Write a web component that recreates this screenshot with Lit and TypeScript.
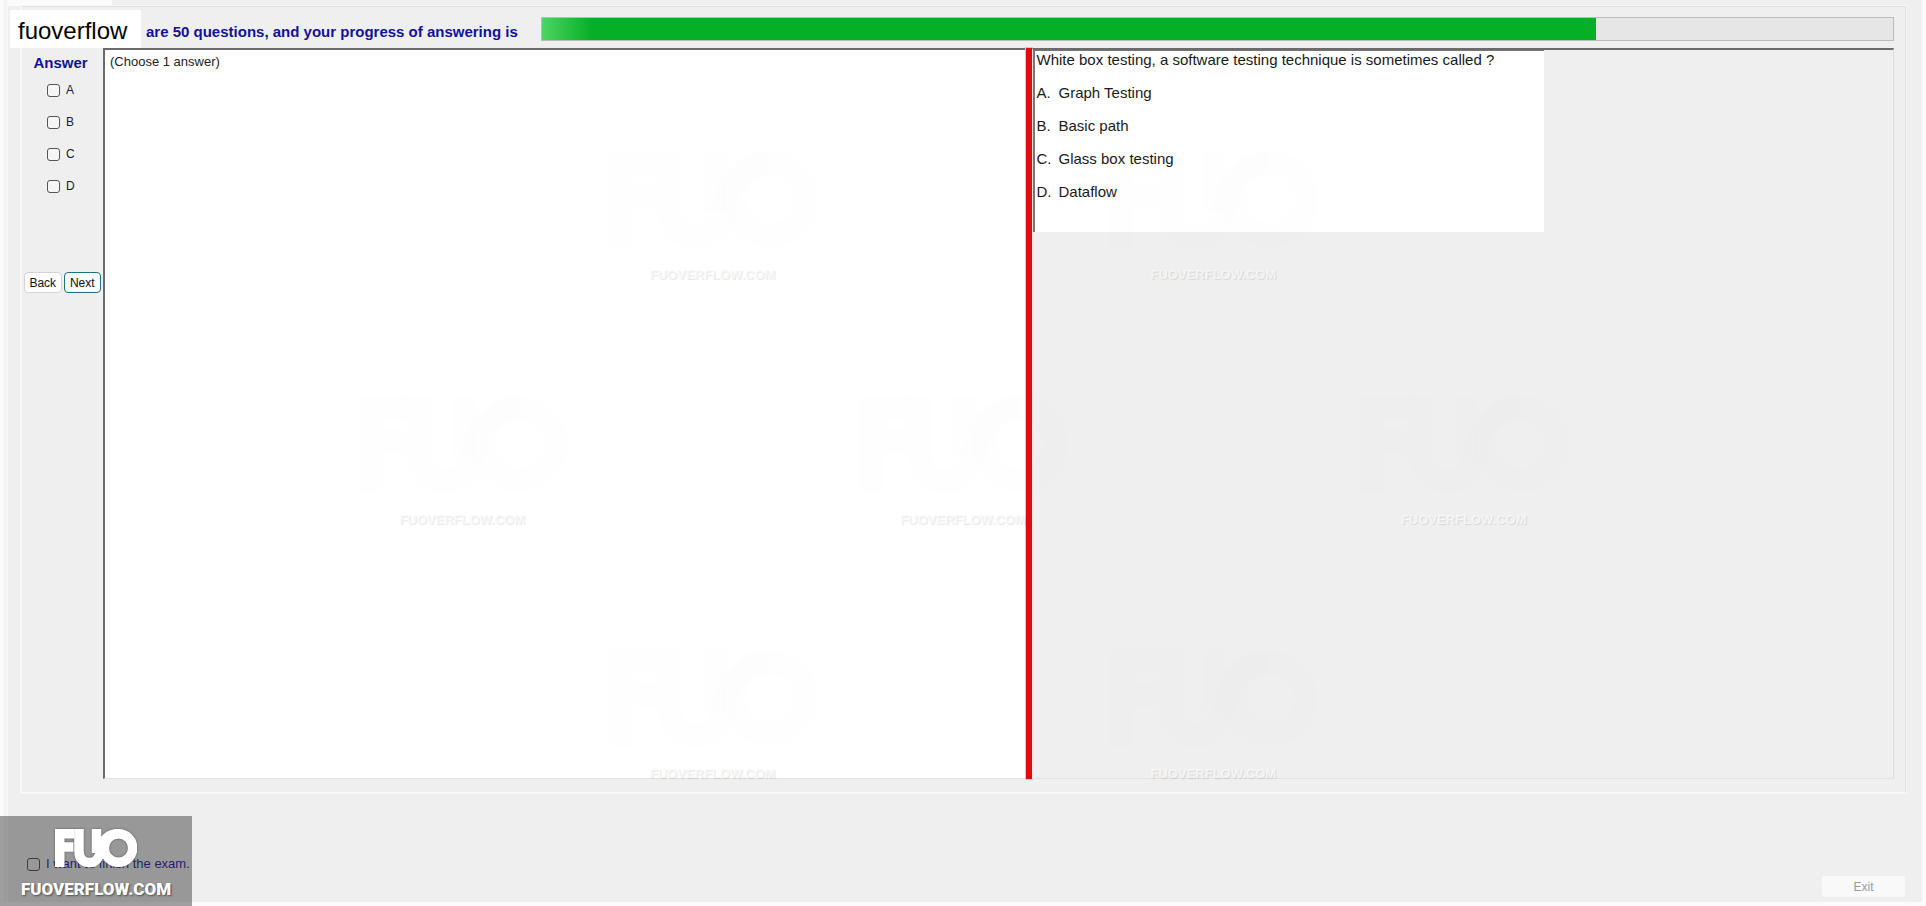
import { LitElement, html, css, svg } from "lit";
import { customElement, property, state } from "lit/decorators.js";
import { styleMap } from "lit/directives/style-map.js";

const logo = svg`
  <g fill="none" stroke="currentColor" stroke-width="9.5">
    <path d="M4.75 38V4.75H19.500M9 18H18.500" />
    <path d="M24 0V22C24 30 28 33.600 34.500 33.600C42 33.600 44.500 28 46 20C48 10 54 4.750 63 4.750" />
    <path d="M41.500 0V24" />
    <circle cx="63.500" cy="19" r="14.200" />
  </g>`;

@customElement("site-mark")
export class SiteMark extends LitElement {
  static styles = css`
    :host {
      display: flex;
      flex-direction: column;
      align-items: center;
      color: rgba(128, 128, 128, 0.02);
    }
    svg {
      width: 208px;
      height: 106px;
      opacity: 0.5;
    }
    .site {
      font: bold 13px/18px "Liberation Sans", Arial, sans-serif;
      color: rgba(250, 250, 250, 0.8);
      text-shadow: 1px 1px 1px rgba(0, 0, 0, 0.1);
      margin-top: 10px;
    }
  `;
  render() {
    return html`
      <svg viewBox="0 0 82 41" aria-hidden="true">${logo}</svg>
      <span class="site">FUOVERFLOW.COM</span>
    `;
  }
}

@customElement("answer-panel")
export class AnswerPanel extends LitElement {
  @property({ type: Array }) choices: string[] = [];

  static styles = css`
    :host {
      display: flex;
      flex-direction: column;
      font: 12px/20px "Liberation Sans", Arial, sans-serif;
      color: #222;
    }
    h2 {
      margin: 4px 0 6px;
      padding-right: 4px;
      text-align: center;
      font: bold 15px/22px "Liberation Sans", Arial, sans-serif;
      color: #12129a;
    }
    .choices {
      display: flex;
      flex-direction: column;
      gap: 12px;
      height: 192px;
      padding-left: 25px;
    }
    label {
      display: flex;
      align-items: center;
      gap: 6px;
    }
    input {
      appearance: none;
      box-sizing: border-box;
      width: 13px;
      height: 13px;
      margin: 0;
      border: 1px solid #555;
      border-radius: 3px;
      background: #f6f6f6;
    }
    input:checked {
      background: #0f7b8a;
    }
    .nav {
      display: grid;
      grid-template-columns: 1fr 1fr;
      gap: 2px;
      padding: 0 2px;
    }
    button {
      height: 21px;
      padding: 0;
      border: 1px solid #d4d4d4;
      border-radius: 4px;
      background: #fdfdfd;
      font: 12px/18px "Liberation Sans", Arial, sans-serif;
      color: #111;
    }
    .next {
      border-color: #1b7280;
      background: #f7fbfb;
    }
  `;
  render() {
    return html`
      <h2>Answer</h2>
      <div class="choices">
        ${this.choices.map((c) => html`<label><input type="checkbox" name=${c} />${c}</label>`)}
      </div>
      <div class="nav">
        <button type="button">Back</button>
        <button type="button" class="next">Next</button>
      </div>
    `;
  }
}

@customElement("app-root")
export class AppRoot extends LitElement {
  @state() private progress = 78;

  private options = [
    ["A.", "Graph Testing"],
    ["B.", "Basic path"],
    ["C.", "Glass box testing"],
    ["D.", "Dataflow"],
  ];

  private marks = [
    [37, 24], [63, 24],
    [24, 51], [50, 51], [76, 51],
    [37, 79], [63, 79],
  ];

  static styles = css`
    :host {
      display: block;
      position: relative;
      box-sizing: border-box;
      min-height: 100vh;
      padding: 0 4px 4px 3px;
      overflow: hidden;
      background: #fbfbfb;
      font-family: "Liberation Sans", Arial, sans-serif;
    }
    .window {
      box-sizing: border-box;
      display: flex;
      flex-direction: column;
      min-height: calc(100vh - 4px);
      background: #efefef;
      border-left: 5px double #f7f7f7;
    }
    .tabs {
      height: 6px;
    }
    .tab {
      width: 104px;
      height: 6px;
      background: #fbfbfb;
    }
    .group {
      flex: 1;
      display: flex;
      flex-direction: column;
      margin: 0 16px 0 13px;
      padding: 0 11px 13px 0;
      border: 1px solid #e2e2e2;
      border-left-color: #fafafa;
      border-bottom-color: #fafafa;
      outline: 1px solid #f6f6f6;
    }
    .header {
      display: flex;
      align-items: center;
      height: 41px;
      padding-left: 124px;
    }
    .title {
      width: 395px;
      margin: 8px 0 0;
      font: bold 15px/20px "Liberation Sans", Arial, sans-serif;
      color: #12129a;
      white-space: nowrap;
    }
    .track {
      flex: 1;
      box-sizing: border-box;
      height: 24px;
      margin-top: 2px;
      border: 1px solid #bcbcbc;
      background: #e6e6e6;
    }
    .bar {
      height: 100%;
      background: linear-gradient(90deg, #4fd463, #06b025 50px);
    }
    .body {
      flex: 1;
      display: grid;
      grid-template-columns: 81px 922fr 6px 862fr;
    }
    .pane {
      border: 1px solid #e3e3e3;
      border-top: 2px solid #6b6b6b;
      border-right-color: #fff;
    }
    .prompt {
      border-left: 2px solid #6b6b6b;
      background: #fff;
    }
    .prompt p {
      margin: 2px 5px;
      font-size: 13px;
      line-height: 20px;
      color: #222;
    }
    .splitter {
      background: #d90f10;
      box-shadow: 0 0 0 1px #f3b9b4;
    }
    .question {
      border-right-color: #dcdcdc;
    }
    .sheet {
      box-sizing: border-box;
      width: 59.5%;
      height: 182px;
      border-left: 2px solid #777;
      border-top: 1px solid #777;
      background: #fff;
      font-size: 15px;
      line-height: 18px;
      color: #1a1a1a;
      padding-left: 2px;
    }
    .sheet p,
    .sheet ol {
      margin: 0 0 15px;
      padding: 0;
      list-style: none;
    }
    .sheet ol {
      display: flex;
      flex-direction: column;
      gap: 15px;
    }
    .sheet li {
      display: grid;
      grid-template-columns: 22px 1fr;
    }
    .footer {
      display: flex;
      justify-content: space-between;
      align-items: flex-end;
      height: 104px;
      padding: 0 17px 5px 19px;
    }
    .finish {
      display: flex;
      align-items: center;
      gap: 6px;
      margin-bottom: 23px;
      font-size: 13px;
      line-height: 20px;
      color: #12129a;
    }
    .finish input {
      appearance: none;
      box-sizing: border-box;
      width: 13px;
      height: 13px;
      margin: 0;
      border: 1px solid #444;
      border-radius: 3px;
    }
    .exit {
      width: 83px;
      height: 21px;
      border: 0;
      border-radius: 2px;
      background: #f9f9f9;
      font: 12px/20px "Liberation Sans", Arial, sans-serif;
      color: #999;
    }
    .badge {
      position: absolute;
      left: 10px;
      top: 10px;
      box-sizing: border-box;
      width: 131px;
      height: 38px;
      padding: 2px 8px;
      background: #fff;
      font-size: 24px;
      line-height: 38px;
      color: #000;
      white-space: nowrap;
    }
    .marks {
      position: absolute;
      inset: 0;
      pointer-events: none;
    }
    .marks site-mark {
      position: absolute;
      transform: translate(-50%, -50%);
    }
    .brand {
      position: absolute;
      left: 0;
      bottom: 0;
      box-sizing: border-box;
      display: flex;
      flex-direction: column;
      align-items: center;
      width: 192px;
      height: 90px;
      padding-top: 13px;
      background: rgba(50, 50, 50, 0.46);
      color: #fff;
      pointer-events: none;
    }
    .brand svg {
      width: 82px;
      height: 41px;
      filter: drop-shadow(0 0 1px rgba(0, 0, 0, 0.4));
    }
    .brand span {
      margin-top: 7px;
      font: 900 17px/24px Roboto, "Liberation Sans", sans-serif;
      text-shadow: 1px 1px 2px rgba(0, 0, 0, 0.5);
    }
  `;

  render() {
    return html`
      <div class="window">
        <div class="tabs"><div class="tab"></div></div>
        <section class="group">
          <header class="header">
            <h1 class="title">are 50 questions, and your progress of answering is</h1>
            <div class="track" role="progressbar" aria-valuenow=${this.progress}>
              <div class="bar" style=${styleMap({ width: `${this.progress}%` })}></div>
            </div>
          </header>
          <div class="body">
            <answer-panel .choices=${["A", "B", "C", "D"]}></answer-panel>
            <div class="pane prompt"><p>(Choose 1 answer)</p></div>
            <div class="splitter"></div>
            <div class="pane question">
              <article class="sheet">
                <p>White box testing, a software testing technique is sometimes called ?</p>
                <ol>
                  ${this.options.map(([k, t]) => html`<li><span>${k}</span><span>${t}</span></li>`)}
                </ol>
              </article>
            </div>
          </div>
        </section>
        <footer class="footer">
          <label class="finish"><input type="checkbox" name="finish" />I want to finish the exam.</label>
          <button type="button" class="exit" disabled>Exit</button>
        </footer>
      </div>
      <div class="badge">fuoverflow</div>
      <div class="marks" aria-hidden="true">
        ${this.marks.map(([x, y]) => html`<site-mark style=${styleMap({ left: `${x}%`, top: `${y}%` })}></site-mark>`)}
      </div>
      <div class="brand">
        <svg viewBox="0 0 82 41" aria-hidden="true">${logo}</svg>
        <span>FUOVERFLOW.COM</span>
      </div>
    `;
  }
}
